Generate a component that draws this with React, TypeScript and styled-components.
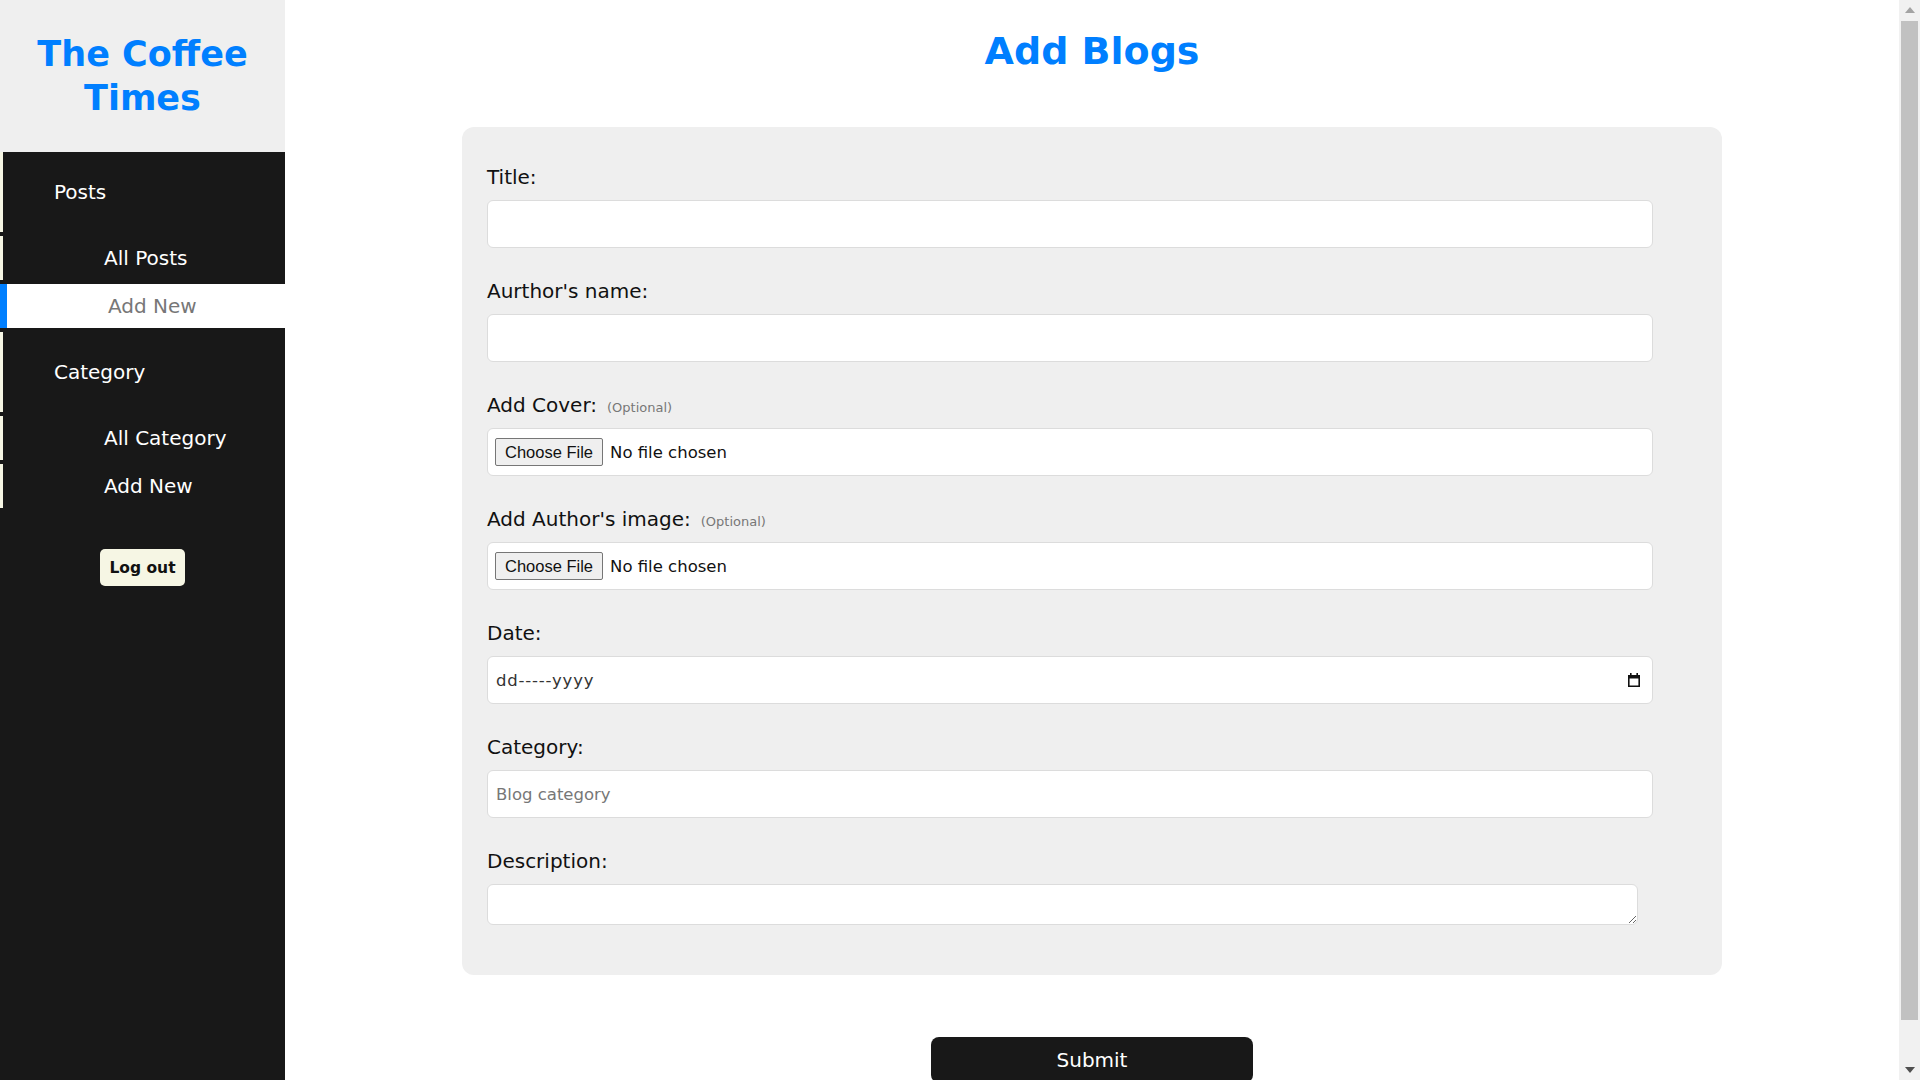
import React from "react";
import styled, { createGlobalStyle } from "styled-components";

const GlobalStyle = createGlobalStyle`
  html {
    scrollbar-width: none;
  }
  html, body {
    margin: 0;
    padding: 0;
  }
  body {
    font-family: "DejaVu Sans", "Noto Sans", sans-serif;
    background: #ffffff;
    color: #111111;
  }
`;

const BLUE = "#007fff";
const CREAM = "#f6f6e4";
const DARK = "#181818";

const Layout = styled.div`
  display: grid;
  grid-template-columns: 285px 1fr 21px;
  min-height: 100vh;
`;

/* ---------- sidebar ---------- */

const Sidebar = styled.aside`
  background: ${DARK};
  display: flex;
  flex-direction: column;
`;

const Brand = styled.div`
  height: 152px;
  box-sizing: border-box;
  background: #efefef;
  display: flex;
  align-items: center;
  justify-content: center;
  padding: 0 20px;
  text-align: center;
`;

const BrandTitle = styled.h2`
  margin: 0;
  font-size: 35px;
  line-height: 44px;
  font-weight: 700;
  color: ${BLUE};
`;

const Nav = styled.nav`
  display: flex;
  flex-direction: column;
  gap: 4px;
`;

const NavHeading = styled.div`
  height: 80px;
  display: flex;
  align-items: center;
  padding-left: 51px;
  border-left: 3px solid ${CREAM};
  color: #ffffff;
  font-size: 20px;
`;

const NavLink = styled.a<{ $active?: boolean }>`
  height: 44px;
  display: flex;
  align-items: center;
  padding-left: 101px;
  border-left: ${(p) => (p.$active ? `7px solid ${BLUE}` : `3px solid ${CREAM}`)};
  background: ${(p) => (p.$active ? "#ffffff" : "transparent")};
  color: ${(p) => (p.$active ? "#777777" : "#ffffff")};
  font-size: 20px;
  text-decoration: none;
  cursor: pointer;
`;

const LogoutButton = styled.button`
  align-self: center;
  margin-top: 41px;
  height: 37px;
  padding: 0 9px;
  border: none;
  border-radius: 5px;
  background: ${CREAM};
  color: #111111;
  font-family: "DejaVu Sans", sans-serif;
  font-size: 15.5px;
  font-weight: 700;
  cursor: pointer;
`;

/* ---------- main ---------- */

const Main = styled.main`
  display: flex;
  flex-direction: column;
  align-items: center;
  padding: 27px 0 40px;
`;

const PageTitle = styled.h1`
  margin: 0;
  font-size: 38px;
  line-height: 48px;
  font-weight: 700;
  color: ${BLUE};
`;

const FormCard = styled.form`
  width: 1260px;
  box-sizing: border-box;
  margin-top: 52px;
  padding: 38px 69px 50px 25px;
  background: #efefef;
  border-radius: 12px;
  display: flex;
  flex-direction: column;
  gap: 31px;
`;

const Field = styled.div`
  display: flex;
  flex-direction: column;
  gap: 11px;
`;

const Label = styled.label`
  display: block;
  height: 24px;
  font-size: 20px;
  line-height: 24px;
  color: #111111;
`;

const Optional = styled.span`
  margin-left: 10px;
  font-size: 13px;
  line-height: 1;
  color: #777777;
`;

const boxBase = `
  height: 48px;
  box-sizing: border-box;
  border: 1px solid #dcdcdc;
  border-radius: 6px;
  background: #ffffff;
`;

const TextInput = styled.input`
  ${boxBase}
  width: 100%;
  padding: 0 8px;
  font-family: "DejaVu Sans", sans-serif;
  font-size: 16.5px;
  color: #222222;
  outline: none;
  &::placeholder {
    color: #777777;
  }
`;

const FileBox = styled.div`
  ${boxBase}
  display: flex;
  align-items: center;
  padding: 0 7px;
`;

const FileInput = styled.input`
  font-family: "DejaVu Sans", sans-serif;
  font-size: 16.5px;
  color: #111111;
  &::file-selector-button {
    height: 28px;
    margin-right: 7px;
    padding: 0 9px;
    border: 1px solid #767676;
    border-radius: 2px;
    background: #efefef;
    color: #111111;
    font-family: "Liberation Sans", Arial, sans-serif;
    font-size: 16.5px;
  }
`;

const DateBox = styled.div`
  ${boxBase}
  display: flex;
  align-items: center;
  padding: 0 11px 0 8px;
`;

const DateText = styled.input`
  flex: 1;
  height: 100%;
  border: none;
  padding: 0;
  background: transparent;
  outline: none;
  font-family: "DejaVu Sans", sans-serif;
  font-size: 16.5px;
  letter-spacing: 0.8px;
  color: #333333;
  &::placeholder {
    color: #333333;
  }
`;

const TextArea = styled.textarea`
  width: calc(100% - 15px);
  height: 41px;
  box-sizing: border-box;
  border: 1px solid #dcdcdc;
  border-radius: 6px;
  background: #ffffff;
  padding: 6px 8px;
  font-family: "DejaVu Sans", sans-serif;
  font-size: 16.5px;
  outline: none;
`;

const SubmitButton = styled.button`
  margin-top: 62px;
  width: 322px;
  height: 46px;
  border: none;
  border-radius: 8px;
  background: ${DARK};
  color: #ffffff;
  font-family: "DejaVu Sans", sans-serif;
  font-size: 20px;
  cursor: pointer;
`;

/* ---------- window scrollbar ---------- */

const ScrollRail = styled.div`
  position: sticky;
  top: 0;
  align-self: start;
  height: 100vh;
  background: #f1f1f1;
  display: flex;
  flex-direction: column;
`;

const RailArrow = styled.div`
  height: 20px;
  display: flex;
  align-items: center;
  justify-content: center;
`;

const RailTrack = styled.div`
  flex: 1;
  padding: 1px 2px;
`;

const RailThumb = styled.div`
  background: #c1c1c1;
`;

const Triangle = ({ up, color }: { up?: boolean; color: string }) => (
  <svg width="10" height="6" viewBox="0 0 10 6" aria-hidden="true">
    <path d={up ? "M0 6L5 0L10 6z" : "M0 0L5 6L10 0z"} fill={color} />
  </svg>
);

const CalendarIcon = () => (
  <svg width="14" height="15" viewBox="0 0 14 15" aria-hidden="true">
    <path d="M3 0h1.6v2.5H3zM9.4 0H11v2.5H9.4z" fill="#111" />
    <path d="M1 2h12v12H1z M2.6 5.6v6.8h8.8V5.6z" fillRule="evenodd" fill="#111" />
  </svg>
);

export default function App() {
  const thumbRatio = 1080 / 1122;
  return (
    <>
      <GlobalStyle />
      <Layout>
        <Sidebar>
          <Brand>
            <BrandTitle>The Coffee Times</BrandTitle>
          </Brand>
          <Nav>
            <NavHeading>Posts</NavHeading>
            <NavLink>All Posts</NavLink>
            <NavLink $active>Add New</NavLink>
            <NavHeading>Category</NavHeading>
            <NavLink>All Category</NavLink>
            <NavLink>Add New</NavLink>
          </Nav>
          <LogoutButton>Log out</LogoutButton>
        </Sidebar>
        <Main>
          <PageTitle>Add Blogs</PageTitle>
          <FormCard onSubmit={(e) => e.preventDefault()}>
            <Field>
              <Label htmlFor="title">Title:</Label>
              <TextInput id="title" type="text" />
            </Field>
            <Field>
              <Label htmlFor="author">Aurthor's name:</Label>
              <TextInput id="author" type="text" />
            </Field>
            <Field>
              <Label htmlFor="cover">
                Add Cover:<Optional>(Optional)</Optional>
              </Label>
              <FileBox>
                <FileInput id="cover" type="file" />
              </FileBox>
            </Field>
            <Field>
              <Label htmlFor="authorImg">
                Add Author's image:<Optional>(Optional)</Optional>
              </Label>
              <FileBox>
                <FileInput id="authorImg" type="file" />
              </FileBox>
            </Field>
            <Field>
              <Label htmlFor="date">Date:</Label>
              <DateBox>
                <DateText id="date" type="text" placeholder="dd-----yyyy" />
                <CalendarIcon />
              </DateBox>
            </Field>
            <Field>
              <Label htmlFor="category">Category:</Label>
              <TextInput id="category" type="text" placeholder="Blog category" />
            </Field>
            <Field>
              <Label htmlFor="desc">Description:</Label>
              <TextArea id="desc" />
            </Field>
          </FormCard>
          <SubmitButton type="button">Submit</SubmitButton>
        </Main>
        <ScrollRail aria-hidden="true">
          <RailArrow>
            <Triangle up color="#a3a3a3" />
          </RailArrow>
          <RailTrack>
            <RailThumb style={{ height: `${thumbRatio * 100}%` }} />
          </RailTrack>
          <RailArrow>
            <Triangle color="#505050" />
          </RailArrow>
        </ScrollRail>
      </Layout>
    </>
  );
}
